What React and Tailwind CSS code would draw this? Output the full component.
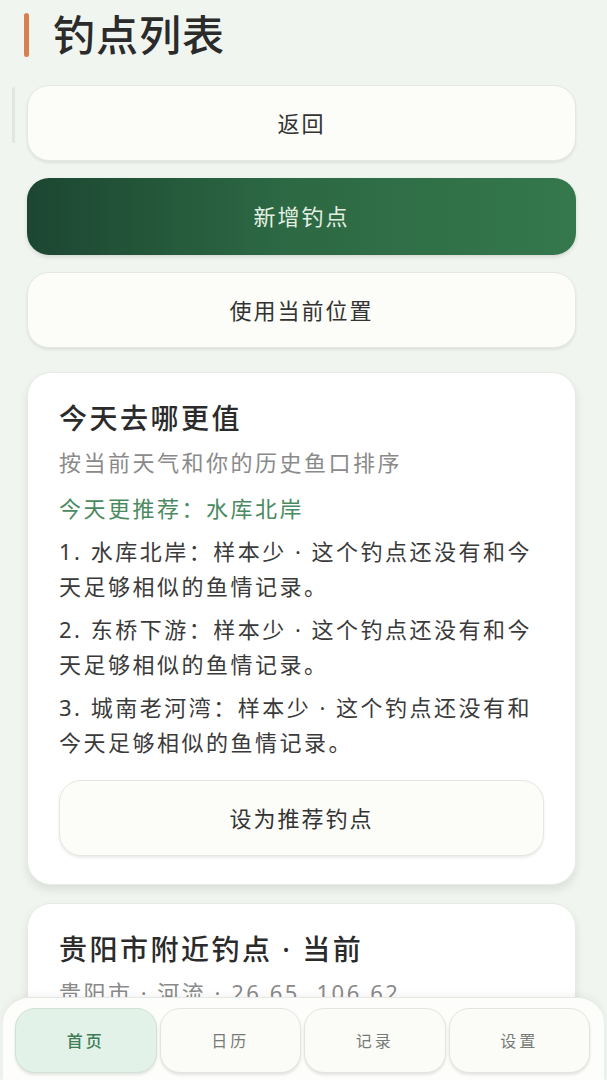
const items = [
  "1. 水库北岸：样本少 · 这个钓点还没有和今天足够相似的鱼情记录。",
  "2. 东桥下游：样本少 · 这个钓点还没有和今天足够相似的鱼情记录。",
  "3. 城南老河湾：样本少 · 这个钓点还没有和今天足够相似的鱼情记录。",
];

const tabs = ["首页", "日历", "记录", "设置"];

// 普通浅色按钮
const LightButton = ({ label, className = "" }) => (
  <button
    className={`flex h-[76px] w-full items-center justify-center rounded-[22px] border border-[#e5e8e1] bg-[#fcfdf8] text-[22px] font-normal tracking-[2px] text-[#333] shadow-[0_2px_3px_rgba(0,0,0,0.08)] ${className}`}
  >
    {label}
  </button>
);

export default function App() {
  return (
    <div className="relative flex h-[1080px] flex-col overflow-hidden bg-[#f1f5ef] font-['Noto_Sans','Noto_Sans_CJK_SC',sans-serif]">
      {/* 左侧滚动条痕迹 */}
      <div className="absolute left-[12px] top-[87px] h-[56px] w-[3px] rounded-full bg-[#e2e5e0]" />

      <main className="h-[997px] shrink-0 overflow-hidden pl-[27px] pr-[31px] pt-[13px]">
        {/* 标题 */}
        <div className="-ml-[3px] flex h-[44px] items-center gap-[24px]">
          <div className="h-full w-[5px] rounded-sm bg-[#d9804f]" />
          <h1 className="text-[42px] font-medium leading-none tracking-[1px] text-[#2b2b2b]">
            钓点列表
          </h1>
        </div>

        <div className="mt-[28px] flex flex-col gap-[17px]">
          <LightButton label="返回" />
          <button className="flex h-[77px] w-full items-center justify-center rounded-[22px] bg-linear-to-r from-[#1c4631] via-[#2c6843] via-45% to-[#35784c] text-[22px] font-normal tracking-[2px] text-[#e3efe2] shadow-[0_2px_4px_rgba(0,0,0,0.12)]">
            新增钓点
          </button>
          <LightButton label="使用当前位置" />
        </div>

        {/* 今天去哪更值 */}
        <section className="mt-[24px] rounded-[24px] border border-[#e8ebe5] bg-white px-[31px] pb-[28px] pt-[27px] shadow-[0_5px_10px_rgba(0,0,0,0.09)]">
          <h2 className="text-[28px] font-medium leading-[36px] tracking-[2.5px] text-[#2b2b2b]">
            今天去哪更值
          </h2>
          <p className="mt-[10px] text-[22px] leading-[32px] tracking-[2.5px] text-[#8a8a8a]">
            按当前天气和你的历史鱼口排序
          </p>
          <p className="mt-[14px] text-[22px] leading-[32px] tracking-[2.5px] text-[#4b8a61]">
            今天更推荐：水库北岸
          </p>
          <div className="mt-[10px] flex flex-col gap-[8px]">
            {items.map((t) => (
              <p
                key={t}
                className="text-[22px] leading-[35px] tracking-[2.5px] text-[#3a3a3a]"
              >
                {t}
              </p>
            ))}
          </div>
          <LightButton label="设为推荐钓点" className="mt-[20px] h-[75px]" />
        </section>

        {/* 当前位置卡片 */}
        <section className="mt-[18px] rounded-[24px] border border-[#e8ebe5] bg-white px-[31px] pb-[28px] pt-[27px] shadow-[0_5px_10px_rgba(0,0,0,0.09)]">
          <h2 className="text-[28px] font-medium leading-[36px] tracking-[2.5px] text-[#2b2b2b]">
            贵阳市附近钓点 · 当前
          </h2>
          <p className="mt-[9px] text-[22px] leading-[32px] tracking-[2.5px] text-[#8a8a8a]">
            贵阳市 · 河流 · 26.65, 106.62
          </p>
        </section>
      </main>

      {/* 底部导航 */}
      <nav className="mx-[3px] flex flex-1 gap-[3px] rounded-t-[26px] border-t border-[#e6e9e3] bg-[#fdfdfb] pb-[8px] pl-[12px] pr-[14px] pt-[10px] shadow-[0_-2px_8px_rgba(0,0,0,0.05)]">
        {tabs.map((t, i) => (
          <button
            key={t}
            className={`flex h-[65px] flex-1 items-center justify-center rounded-[20px] border text-[16px] tracking-[3px] shadow-[0_2px_3px_rgba(0,0,0,0.1)] ${
              i === 0
                ? "border-[#cfe2d4] bg-[#e3f2e8] font-medium text-[#3e7c57]"
                : "border-[#e3e6e0] bg-[#fbfcf7] text-[#777a77]"
            }`}
          >
            {t}
          </button>
        ))}
      </nav>
    </div>
  );
}
